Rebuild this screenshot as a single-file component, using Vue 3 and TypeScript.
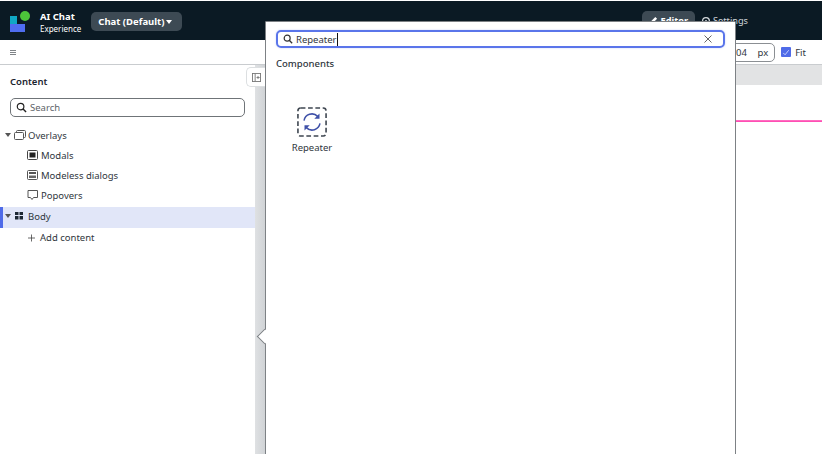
<script setup lang="ts">
const children = [
  { label: 'Modals', icon: 'modal' },
  { label: 'Modeless dialogs', icon: 'modeless' },
  { label: 'Popovers', icon: 'popover' },
]
</script>

<template>
  <div class="app">
    <header class="topbar">
      <div class="brand">
        <svg class="logo" width="20" height="21" viewBox="0 0 20 21">
          <rect x="0" y="5" width="7" height="8" fill="#10a8c4" />
          <rect x="0" y="13" width="15" height="8" fill="#4f6df0" />
          <circle cx="15" cy="5" r="5" fill="#4cc43a" />
        </svg>
        <div class="brand-text">
          <div class="brand-name">AI Chat</div>
          <div class="brand-sub">Experience</div>
        </div>
        <button class="variant">Chat (Default)<span class="caret" /></button>
      </div>
      <nav class="tabs">
        <span class="tab active">
          <svg width="9" height="9" viewBox="0 0 10 10"><path d="M1 9l1-3 5-5 2 2-5 5z" fill="#fff" /></svg>
          Editor
        </span>
        <span class="tab">
          <svg width="10" height="10" viewBox="0 0 10 10"><circle cx="5" cy="5" r="3.4" fill="none" stroke="#d5dade" stroke-width="1.2" /><circle cx="5" cy="5" r="1" fill="#d5dade" /></svg>
          Settings
        </span>
      </nav>
    </header>

    <div class="toolbar">
      <span class="menu"><i /><i /><i /></span>
      <div class="size">
        <span class="size-box"><span>1304</span><span>px</span></span>
        <label class="fit">
          <span class="check">
            <svg width="11" height="11" viewBox="0 0 11 11"><path d="M2.5 6l2 2 4-5" fill="none" stroke="#cfd8ff" stroke-width="1" /></svg>
          </span>
          Fit
        </label>
      </div>
    </div>

    <div class="main">
      <aside class="sidebar">
        <h2 class="side-title">Content</h2>
        <div class="side-search">
          <svg width="11" height="11" viewBox="0 0 12 12"><circle cx="5" cy="5" r="3.6" fill="none" stroke="#222" stroke-width="1.3" /><path d="M7.7 7.7L11 11" stroke="#222" stroke-width="1.5" /></svg>
          <span>Search</span>
        </div>
        <ul class="tree">
          <li class="row">
            <span class="tri" />
            <svg class="ico" width="12" height="12" viewBox="0 0 12 12"><rect x="2.5" y="1.5" width="9" height="7" rx="1" fill="none" stroke="#555" /><rect x="0.5" y="3.5" width="9" height="7" rx="1" fill="#fff" stroke="#555" /></svg>
            <span>Overlays</span>
          </li>
          <li v-for="c in children" :key="c.label" class="row child">
            <svg class="ico" width="12" height="12" viewBox="0 0 12 12">
              <template v-if="c.icon === 'modal'">
                <rect x="0.5" y="1.5" width="10" height="9" rx="1" fill="none" stroke="#444" />
                <rect x="2.5" y="3.5" width="6" height="5" fill="#222" />
              </template>
              <template v-else-if="c.icon === 'modeless'">
                <rect x="0.5" y="1.5" width="10" height="9" rx="1" fill="none" stroke="#555" />
                <rect x="2" y="3" width="7" height="2" fill="#555" />
                <rect x="2" y="6.5" width="7" height="2.5" fill="#666" />
              </template>
              <path v-else d="M1 1.5h9.5v7h-4l-1.5 2-1.5-2h-2.5z" fill="none" stroke="#555" />
            </svg>
            <span>{{ c.label }}</span>
          </li>
          <li class="row selected">
            <span class="tri" />
            <svg class="ico" width="12" height="12" viewBox="0 0 12 12"><path d="M1 2h3.5v3H1zM5.5 2H9v3H5.5zM1 6h3.5v3.5H1zM5.5 6H9v3.5H5.5z" fill="#1c2733" /></svg>
            <span>Body</span>
          </li>
          <li class="row child add">
            <svg class="ico" width="11" height="12" viewBox="0 0 11 12"><path d="M4.5 2.5v7M1 6h7" stroke="#444" stroke-width="0.8" /></svg>
            <span>Add content</span>
          </li>
        </ul>
      </aside>

      <div class="gutter" />

      <section class="canvas">
        <div class="ruler" />
        <div class="guide" />
      </section>

      <button class="collapse">
        <svg width="9" height="9" viewBox="0 0 10 10"><rect x="0.5" y="0.5" width="9" height="9" fill="none" stroke="#777" /><path d="M3.5 1v8M5 5h3.5M6.7 3.3v3.4" stroke="#777" /></svg>
      </button>
    </div>

    <div class="picker">
      <div class="picker-search">
        <svg width="10" height="10" viewBox="0 0 12 12"><circle cx="5" cy="5" r="3.6" fill="none" stroke="#333" stroke-width="1.4" /><path d="M7.5 7.5L11 11" stroke="#333" stroke-width="1.6" /></svg>
        <span class="query">Repeater</span>
        <svg class="clear" width="8" height="8" viewBox="0 0 8 8"><path d="M0.5 0.5l7 7M7.5 0.5l-7 7" stroke="#666" stroke-width="1" /></svg>
      </div>
      <h3 class="picker-title">Components</h3>
      <div class="result">
        <svg width="30" height="30" viewBox="0 0 32 32">
          <rect x="1" y="1" width="30" height="30" rx="3" fill="none" stroke="#3e4650" stroke-width="1.7" stroke-dasharray="5 2.8" />
          <path d="M7.5 14.5A8.5 8.5 0 0 1 22 10" fill="none" stroke="#3f51a8" stroke-width="1.6" />
          <path d="M24.5 17.5A8.5 8.5 0 0 1 10 22" fill="none" stroke="#3f51a8" stroke-width="1.6" />
          <path d="M24 7v5.5h-5.5z" fill="#3f51a8" />
          <path d="M8 25v-5.5h5.5z" fill="#3f51a8" />
        </svg>
        <span>Repeater</span>
      </div>
      <span class="arrow" />
    </div>
  </div>
</template>

<style>
html, body {
  margin: 0;
  overflow: hidden;
  background: #fff;
}
</style>

<style scoped>
.app {
  position: relative;
  width: 822px;
  height: 454px;
  overflow: hidden;
  display: flex;
  flex-direction: column;
  padding-top: 1px;
  box-sizing: border-box;
  background: #fff;
  font-family: "Noto Sans", sans-serif;
  font-size: 9.5px;
  color: #2f363d;
}
.topbar {
  height: 39px;
  flex: none;
  background: #0b1a24;
  display: flex;
  align-items: center;
  justify-content: space-between;
  padding: 0 71px 0 10px;
  color: #fff;
}
.brand {
  display: flex;
  align-items: center;
}
.logo {
  margin-right: 10px;
  margin-top: 2px;
}
.brand-text {
  margin-top: 3px;
}
.brand-name {
  font-size: 9.5px;
  font-weight: 700;
  line-height: 13px;
}
.brand-sub {
  font-size: 8px;
  line-height: 12px;
}
.variant {
  margin-left: 10px;
  margin-top: 2px;
  height: 19px;
  padding: 0 10px 0 7px;
  border: none;
  border-radius: 5px;
  background: #3d4a54;
  color: #fff;
  font: 700 9.5px "Noto Sans", sans-serif;
  display: flex;
  align-items: center;
  gap: 2px;
}
.caret {
  width: 0;
  height: 0;
  border-left: 3px solid transparent;
  border-right: 3px solid transparent;
  border-top: 4px solid #fff;
}
.tabs {
  display: flex;
  align-items: center;
  gap: 3px;
}
.tab {
  display: flex;
  align-items: center;
  gap: 2px;
  height: 19px;
  padding: 0 3px;
  border-radius: 5px;
  color: #cfd5da;
  font-size: 9.2px;
}
.tab.active {
  background: #3d4a54;
  color: #fff;
  font-weight: 700;
  padding: 0 7px;
}
.toolbar {
  height: 25px;
  flex: none;
  box-sizing: border-box;
  border-bottom: 1px solid #c9cccf;
  display: flex;
  align-items: center;
  justify-content: space-between;
  padding-right: 16px;
}
.menu {
  margin-left: 10px;
  display: flex;
  flex-direction: column;
  gap: 1px;
}
.menu i {
  display: block;
  width: 6px;
  height: 1px;
  background: #808488;
}
.size {
  display: flex;
  align-items: center;
  gap: 6px;
}
.size-box {
  width: 62px;
  height: 19px;
  box-sizing: border-box;
  border: 1px solid #8b8f93;
  border-radius: 5px;
  display: flex;
  align-items: center;
  justify-content: space-between;
  padding: 0 6px 0 11px;
}
.fit {
  display: flex;
  align-items: center;
  gap: 4px;
}
.check {
  width: 10px;
  height: 10px;
  border-radius: 1px;
  background: #4f6be8;
  display: flex;
  align-items: center;
  justify-content: center;
}
.main {
  flex: 1;
  display: flex;
  position: relative;
  min-height: 0;
}
.sidebar {
  width: 255px;
  flex: none;
  box-sizing: border-box;
  padding-top: 10px;
}
.side-title {
  margin: 0 0 0 10px;
  font-size: 9.5px;
  font-weight: 600;
  line-height: 13px;
  color: #1c2530;
}
.side-search {
  margin: 10px 10px 0;
  height: 19px;
  box-sizing: border-box;
  border: 1px solid #6f7478;
  border-radius: 5px;
  display: flex;
  align-items: center;
  gap: 3px;
  padding-left: 5px;
  color: #5d6369;
}
.tree {
  list-style: none;
  margin: 8px 0 0;
  padding: 0;
}
.row {
  height: 20px;
  display: flex;
  align-items: center;
  padding-left: 5px;
  box-sizing: border-box;
  white-space: nowrap;
}
.row.child {
  padding-left: 27px;
}
.tri {
  width: 0;
  height: 0;
  border-left: 3px solid transparent;
  border-right: 3px solid transparent;
  border-top: 4px solid #555;
  margin-right: 3px;
}
.ico {
  flex: none;
  margin-right: 2px;
}
.selected {
  height: 21px;
  margin-top: 2px;
  padding-bottom: 3px;
  background: #e1e6f8;
  box-shadow: inset 3px 0 0 #4f6be8;
}
.add {
  height: 19px;
}
.gutter {
  width: 10px;
  flex: none;
  background: linear-gradient(90deg, #dfe1e3, #d0d3d6);
}
.canvas {
  flex: 1;
  min-width: 0;
}
.ruler {
  height: 20px;
  background: #e2e3e4;
}
.guide {
  height: 2px;
  margin-top: 35px;
  background: linear-gradient(#ff7cc6, #ff3fae);
}
.collapse {
  position: absolute;
  left: 246px;
  top: 2px;
  width: 20px;
  height: 20px;
  border: 1px solid #dcdfe1;
  border-right: none;
  border-radius: 5px 0 0 5px;
  background: #fff;
  display: flex;
  align-items: center;
  justify-content: flex-start;
  padding: 0 0 0 5px;
  box-sizing: border-box;
}
.picker {
  position: absolute;
  left: 265px;
  top: 21px;
  width: 471px;
  height: 440px;
  box-sizing: border-box;
  background: #fff;
  border: 1px solid #7d8185;
  border-radius: 1px;
  padding: 8px 10px 0;
}
.picker-search {
  height: 18px;
  box-sizing: border-box;
  border: 2px solid #5a75ea;
  border-radius: 5px;
  display: flex;
  align-items: center;
  padding: 0 11px 0 5px;
  gap: 3px;
  box-shadow: 0 0 2px rgba(90, 117, 234, 0.35);
}
.query {
  border-right: 1px solid #111;
  line-height: 13px;
  color: #30363c;
}
.clear {
  margin-left: auto;
}
.picker-title {
  margin: 9px 0 0;
  font-size: 9.5px;
  font-weight: 500;
  line-height: 13px;
  color: #2f363d;
}
.result {
  width: 72px;
  margin-top: 37px;
  display: flex;
  flex-direction: column;
  align-items: center;
  gap: 4px;
  font-size: 9.5px;
  line-height: 13px;
}
.arrow {
  position: absolute;
  left: -7px;
  top: 309px;
  width: 10px;
  height: 10px;
  background: #fff;
  border-left: 1px solid #7d8185;
  border-bottom: 1px solid #7d8185;
  transform: rotate(45deg);
}
</style>
